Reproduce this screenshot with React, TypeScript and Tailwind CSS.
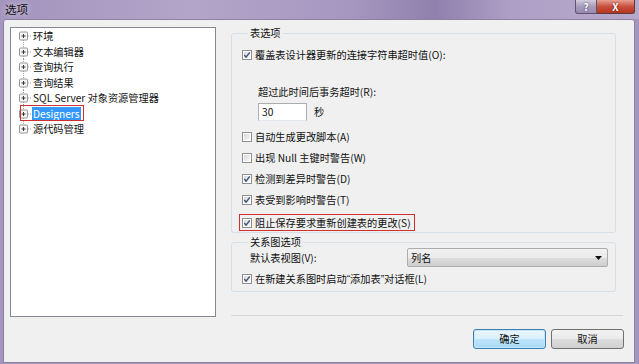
import React from "react";

const treeItems = [
  "环境",
  "文本编辑器",
  "查询执行",
  "查询结果",
  "SQL Server 对象资源管理器",
  "Designers",
  "源代码管理",
];

function Check({ checked }: { checked: boolean }) {
  return (
    <svg width="10" height="10" viewBox="0 0 10 10" className="shrink-0">
      <defs>
        <linearGradient id="cbg" x1="0" y1="0" x2="1" y2="1">
          <stop offset="0" stopColor="#d8d8d8" />
          <stop offset="1" stopColor="#f8f8f8" />
        </linearGradient>
      </defs>
      <rect x="0.5" y="0.5" width="9" height="9" fill="#fff" stroke="#8f8f8f" />
      <rect x="2" y="2" width="6" height="6" fill="url(#cbg)" />
      {checked && (
        <path d="M2.3 5 L4.1 7.2 L7.8 2.4" fill="none" stroke="#3d4f7a" strokeWidth="1.4" />
      )}
    </svg>
  );
}

function TreeGlyph({ first, last }: { first: boolean; last: boolean }) {
  return (
    <svg width="13" height="15.5" viewBox="0 0 13 15.5" className="shrink-0">
      <line
        x1="4.5"
        y1={first ? 8 : 0}
        x2="4.5"
        y2={last ? 8 : 15.5}
        stroke="#a0a0a0"
        strokeDasharray="1 1"
      />
      <line x1="9" y1="8" x2="13" y2="8" stroke="#a0a0a0" strokeDasharray="1 1" />
      <rect x="0.5" y="4" width="8" height="8" rx="1" fill="#f4f4f4" stroke="#989898" />
      <path d="M2.5 8 H6.5 M4.5 6 V10" stroke="#3a3a3a" strokeWidth="1" />
    </svg>
  );
}

function Row({
  checked,
  children,
  h = "h-[21px]",
}: {
  checked: boolean;
  children: React.ReactNode;
  h?: string;
}) {
  return (
    <div className={`flex items-center gap-[3px] whitespace-nowrap ${h}`}>
      <Check checked={checked} />
      <span>{children}</span>
    </div>
  );
}

export default function App() {
  return (
    <div className="flex h-[364px] w-[639px] flex-col overflow-hidden bg-[#a496bf] font-['Noto_Sans_CJK_SC','Microsoft_YaHei',sans-serif] text-[10.2px] leading-[16px] text-[#111]">
      <div className="flex h-[19px] shrink-0 items-start justify-between bg-[linear-gradient(90deg,#a394bd_0%,#b3a5c9_30%,#a597bf_55%,#8f80ad_68%,#ae9fc6_80%,#b7a9cb_100%)]">
        <div className="pl-[5px] pt-[1px] text-[11.5px] leading-[16px] text-[#101010] [text-shadow:0_0_6px_#e8e0f0]">
          选项
        </div>
        <div className="mr-[4px] flex h-[14px]">
          <div className="flex w-[22px] items-center justify-center rounded-bl-[3px] border border-t-0 border-[#5e5470] bg-[linear-gradient(#d3cadf,#a89cbd_50%,#978ab0)] text-[10px] font-bold leading-[13px] text-white [text-shadow:0_0_2px_#333]">
            ?
          </div>
          <div className="flex w-[38px] items-center justify-center rounded-br-[3px] border border-l-0 border-t-0 border-[#5e3b3b] bg-[linear-gradient(#e8a093,#c9503d_50%,#b7361f)] text-[10px] font-bold leading-[13px] text-white [text-shadow:0_0_2px_#4a1010]">
            X
          </div>
        </div>
      </div>

      <div className="ml-[3px] flex h-[344px] w-[632px] rounded-t-[3px] border border-[#8c82a0] bg-[#f0f0f0] pl-[6px] pt-[7px]">
        <div className="h-[290px] w-[206px] shrink-0 border border-[#828790] bg-white pl-[8px] leading-[15.5px]">
          {treeItems.map((t, i) => (
            <div key={t} className="relative flex h-[15.5px] items-center whitespace-nowrap">
              <TreeGlyph first={i === 0} last={i === treeItems.length - 1} />
              {t === "Designers" ? (
                <>
                  <span className="bg-[#3399ff] px-[1px] leading-[13px] text-white">{t}</span>
                  <div className="absolute left-[1px] top-[-1px] h-[16px] w-[64px] border border-[#d03030]" />
                </>
              ) : (
                <span className="ml-[1px]">{t}</span>
              )}
            </div>
          ))}
        </div>

        <div className="ml-[15px] flex h-[322px] w-[393px] flex-col">
          <fieldset className="w-[385px] rounded-[3px] border border-[#d5dfe5] pb-[1px] pl-[10px]">
            <legend className="ml-[6px] px-[2px] leading-[12px]">表选项</legend>
            <div className="mt-[8px] flex h-[16px] items-center gap-[3px] whitespace-nowrap">
              <Check checked />
              <span>覆盖表设计器更新的连接字符串超时值(O):</span>
            </div>
            <div className="ml-[16px] mt-[21px] h-[16px]">超过此时间后事务超时(R):</div>
            <div className="ml-[16px] mt-[3px] flex h-[18px] items-center">
              <div className="flex h-[18px] w-[49px] items-center border border-[#abadb3] border-b-[#e3e9ef] bg-white pl-[3px]">
                30
              </div>
              <span className="ml-[7px]">秒</span>
            </div>
            <div className="mt-[5px]">
              <Row checked={false}>自动生成更改脚本(A)</Row>
              <Row checked={false}>出现 Null 主键时警告(W)</Row>
              <Row checked>检测到差异时警告(D)</Row>
              <Row checked>表受到影响时警告(T)</Row>
            </div>
            <div className="-ml-[3px] mt-[4px] flex h-[17px] w-[176px] items-start border border-[#d03030] pl-[2px] pt-[1px]">
              <div className="flex h-[13px] items-center gap-[3px] whitespace-nowrap">
                <Check checked />
                <span>阻止保存要求重新创建表的更改(S)</span>
              </div>
            </div>
          </fieldset>

          <fieldset className="mt-[3px] w-[385px] rounded-[3px] border border-[#d5dfe5] pb-[4px] pl-[10px]">
            <legend className="ml-[6px] px-[2px] leading-[12px]">关系图选项</legend>
            <div className="flex h-[19px] items-center">
              <span className="ml-[8px] w-[157px]">默认表视图(V):</span>
              <div className="flex h-[19px] w-[201px] items-center justify-between rounded-[2px] border border-[#acacac] bg-[linear-gradient(#f2f2f2,#ebebeb_50%,#dddddd_51%,#cfcfcf)] pl-[3px] pr-[5px]">
                <span>列名</span>
                <svg width="7" height="4" viewBox="0 0 7 4">
                  <path d="M0 0 H7 L3.5 4 Z" fill="#111" />
                </svg>
              </div>
            </div>
            <div className="mt-[4px] flex h-[16px] items-center gap-[3px] whitespace-nowrap">
              <Check checked />
              <span>
                在新建关系图时启动<span className="font-['Liberation_Sans',sans-serif]">“</span>添加表
                <span className="font-['Liberation_Sans',sans-serif]">”</span>对话框(L)
              </span>
            </div>
          </fieldset>

          <div className="flex-1" />
          <div className="h-[2px] w-[392px] border-t border-[#d5d5d5] border-b-white" />
          <div className="mt-[12px] flex justify-end gap-[5px]">
            <button className="h-[20px] w-[73px] rounded-[3px] border border-[#3c7fb1] bg-[linear-gradient(#eaf6fd,#d9f0fc_50%,#bee6fd_51%,#a7d9f5)] leading-[16px] shadow-[inset_0_0_0_1px_#c5e6f8]">
              确定
            </button>
            <button className="h-[20px] w-[73px] rounded-[3px] border border-[#707070] bg-[linear-gradient(#f2f2f2,#ebebeb_50%,#dddddd_51%,#cfcfcf)] leading-[16px]">
              取消
            </button>
          </div>
        </div>
      </div>
    </div>
  );
}
